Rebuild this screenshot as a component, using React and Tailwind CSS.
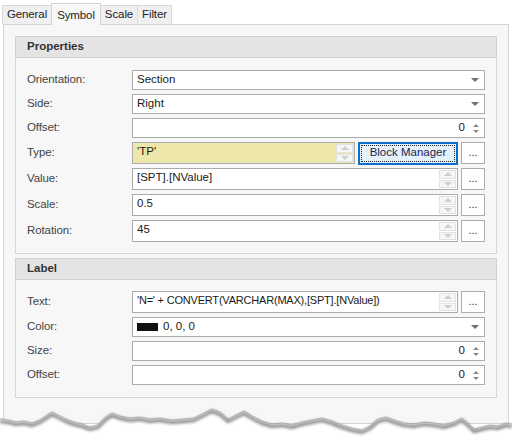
import React from "react";

const font = "font-['Liberation_Sans',Arial,sans-serif]";

const ArrowDown = ({ color = "border-t-[#707070]" }) => (
  <span className={`block h-0 w-0 border-x-[4px] border-t-[4px] border-x-transparent ${color}`} />
);
const ArrowUp = ({ color = "border-b-[#707070]" }) => (
  <span className={`block h-0 w-0 border-x-[4px] border-b-[4px] border-x-transparent ${color}`} />
);

const SmallSpin = () => (
  <div className="flex w-[12px] flex-col items-center justify-center gap-[3px]">
    <span className="block h-0 w-0 border-x-[3px] border-b-[3px] border-x-transparent border-b-[#8a8a8a]" />
    <span className="block h-0 w-0 border-x-[3px] border-t-[3px] border-x-transparent border-t-[#8a8a8a]" />
  </div>
);

const DisabledSpin = () => (
  <div className="flex h-full w-[18px] flex-col gap-px py-px pr-px">
    <div className="flex flex-1 items-center justify-center border border-[#e2e2e2] bg-[#f6f6f6]">
      <ArrowUp color="border-b-[#cdcdcd]" />
    </div>
    <div className="flex flex-1 items-center justify-center border border-[#e2e2e2] bg-[#f6f6f6]">
      <ArrowDown color="border-t-[#cdcdcd]" />
    </div>
  </div>
);

const DotsButton = () => (
  <div className="flex h-[22px] w-[24px] shrink-0 items-center justify-center border border-[#adadad] bg-white pb-[2px] text-[11px] text-[#333]">
    ...
  </div>
);

const Label = ({ children }) => (
  <div className="w-[116px] shrink-0 pl-[11px] text-[11.5px] tracking-[-0.1px] text-[#444]">{children}</div>
);

const DropdownRow = ({ label, value, children }) => (
  <div className="flex h-[20px] items-center">
    <Label>{label}</Label>
    <div className="flex h-[20px] w-[353px] items-center border border-[#ababab] bg-white pl-[4px] pr-[5px] text-[11.5px] text-[#1a1a1a]">
      {children}
      <span className="flex-1">{value}</span>
      <ArrowDown />
    </div>
  </div>
);

const NumberRow = ({ label, value }) => (
  <div className="flex h-[20px] items-center">
    <Label>{label}</Label>
    <div className="flex h-[20px] w-[353px] items-center border border-[#ababab] bg-white pr-[2px] text-[11.5px] text-[#1a1a1a]">
      <span className="flex-1 pr-[5px] text-right">{value}</span>
      <SmallSpin />
    </div>
  </div>
);

const ExprRow = ({ label, value, small }) => (
  <div className="flex h-[22px] items-center">
    <Label>{label}</Label>
    <div className="flex h-[22px] w-[326px] items-start border border-[#ababab] bg-white">
      <span className={`flex-1 truncate pl-[4px] ${small ? "text-[11px] tracking-[-0.2px]" : "text-[11.5px]"} leading-[17px] text-[#1a1a1a]`}>
        {value}
      </span>
      <DisabledSpin />
    </div>
    <div className="w-[3px]" />
    <DotsButton />
  </div>
);

const GroupHeader = ({ children }) => (
  <div className="flex h-[22px] items-center border border-[#d2d2d2] bg-[#e4e4e4] pl-[11px] text-[11.5px] font-bold text-[#333]">
    {children}
  </div>
);

const Tab = ({ children, active, w }) =>
  active ? (
    <div
      className={`relative z-10 -mb-px flex h-[22px] ${w} items-start justify-center border border-b-0 border-[#d4d4d4] bg-[#f7f7f7] pt-[3px] text-[11.5px] tracking-[-0.1px] text-[#222]`}
    >
      {children}
    </div>
  ) : (
    <div
      className={`flex h-[19px] ${w} -ml-px items-center justify-center border border-b-0 border-[#d9d9d9] bg-[#f0f0f0] text-[11.5px] tracking-[-0.1px] text-[#222]`}
    >
      {children}
    </div>
  );

const TornEdge = () => {
  const pts = [
    [0, 419], [8, 420], [16, 422], [24, 421], [32, 423], [40, 420], [46, 416], [52, 412], [58, 415],
    [66, 419], [74, 422], [82, 424], [90, 427], [98, 425], [106, 417], [112, 413], [120, 416],
    [130, 418], [140, 417], [150, 419], [160, 418], [172, 420], [184, 419], [194, 418], [204, 413],
    [212, 409], [220, 412], [228, 419], [236, 415], [244, 411], [252, 416], [262, 421], [272, 424],
    [282, 423], [292, 425], [302, 422], [312, 420], [322, 418], [332, 421], [342, 425], [352, 428],
    [362, 430], [370, 426], [378, 419], [386, 417], [394, 420], [404, 423], [414, 424], [424, 422],
    [434, 423], [444, 425], [454, 422], [462, 418], [468, 423], [474, 429], [482, 427], [490, 425],
    [498, 426], [506, 423], [512, 424],
  ];
  const line = pts.map((p, i) => `${i ? "L" : "M"}${p[0]} ${p[1] - 395}`).join(" ");
  return (
    <svg className="absolute left-0 top-[395px]" width="512" height="49" viewBox="0 0 512 49">
      <defs>
        <filter id="blur" x="-5%" y="-50%" width="110%" height="200%">
          <feGaussianBlur stdDeviation="1.8" />
        </filter>
      </defs>
      <path d={`${line} L512 49 L0 49 Z`} fill="#ffffff" />
      <path d={line} transform="translate(0 2.5)" fill="none" stroke="#555" strokeWidth="3" filter="url(#blur)" opacity="0.75" />
      <path d={line} fill="none" stroke="#a0a0a0" strokeWidth="0.8" />
    </svg>
  );
};

export default function App() {
  return (
    <div className={`relative h-[444px] w-[512px] overflow-hidden bg-white ${font}`}>
      <div className="flex h-[24px] items-end pl-[3px]">
        <Tab w="w-[50px]">General</Tab>
        <Tab active w="w-[50px] -ml-px">Symbol</Tab>
        <Tab w="w-[38px]">Scale</Tab>
        <Tab w="w-[35px]">Filter</Tab>
      </div>

      <div className="ml-[3px] h-[400px] w-[506px] border border-[#d4d4d4] bg-[#f7f7f7] px-[11px] pt-[11px]">
        <div className="w-[482px]">
          <GroupHeader>Properties</GroupHeader>
          <div className="flex flex-col gap-[4px] border-x border-b border-[#d6d6d6] bg-[#f7f7f7] pb-[11px] pt-[12px]">
            <DropdownRow label="Orientation:" value="Section" />
            <DropdownRow label="Side:" value="Right" />
            <NumberRow label="Offset:" value="0" />

            <div className="flex h-[22px] items-center">
              <Label>Type:</Label>
              <div className="flex h-[22px] w-[223px] items-start border border-[#ababab] bg-[#ede7ab]">
                <span className="flex-1 pl-[4px] text-[11.5px] leading-[17px] text-[#1a1a1a]">'TP'</span>
                <DisabledSpin />
              </div>
              <div className="w-[3px]" />
              <div className="flex h-[23px] w-[100px] items-center justify-center border-2 border-[#0f6cc9] bg-[#e5f1fb] p-px">
                <div className="flex h-full w-full items-center justify-center border border-dotted border-[#222] text-[11.5px] text-[#1d1d4a]">
                  Block Manager
                </div>
              </div>
              <div className="w-[3px]" />
              <DotsButton />
            </div>

            <ExprRow label="Value:" value="[SPT].[NValue]" />
            <ExprRow label="Scale:" value="0.5" />
            <ExprRow label="Rotation:" value="45" />
          </div>
        </div>

        <div className="mt-[4px] w-[482px]">
          <GroupHeader>Label</GroupHeader>
          <div className="flex flex-col gap-[4px] border-x border-b border-[#d6d6d6] bg-[#f7f7f7] pb-[12px] pt-[11px]">
            <ExprRow label="Text:" value="'N=' + CONVERT(VARCHAR(MAX),[SPT].[NValue])" small />
            <DropdownRow label="Color:" value="0, 0, 0">
              <span className="mr-[5px] inline-block h-[8px] w-[21px] bg-[#111]" />
            </DropdownRow>
            <NumberRow label="Size:" value="0" />
            <NumberRow label="Offset:" value="0" />
          </div>
        </div>
      </div>

      <TornEdge />
    </div>
  );
}
